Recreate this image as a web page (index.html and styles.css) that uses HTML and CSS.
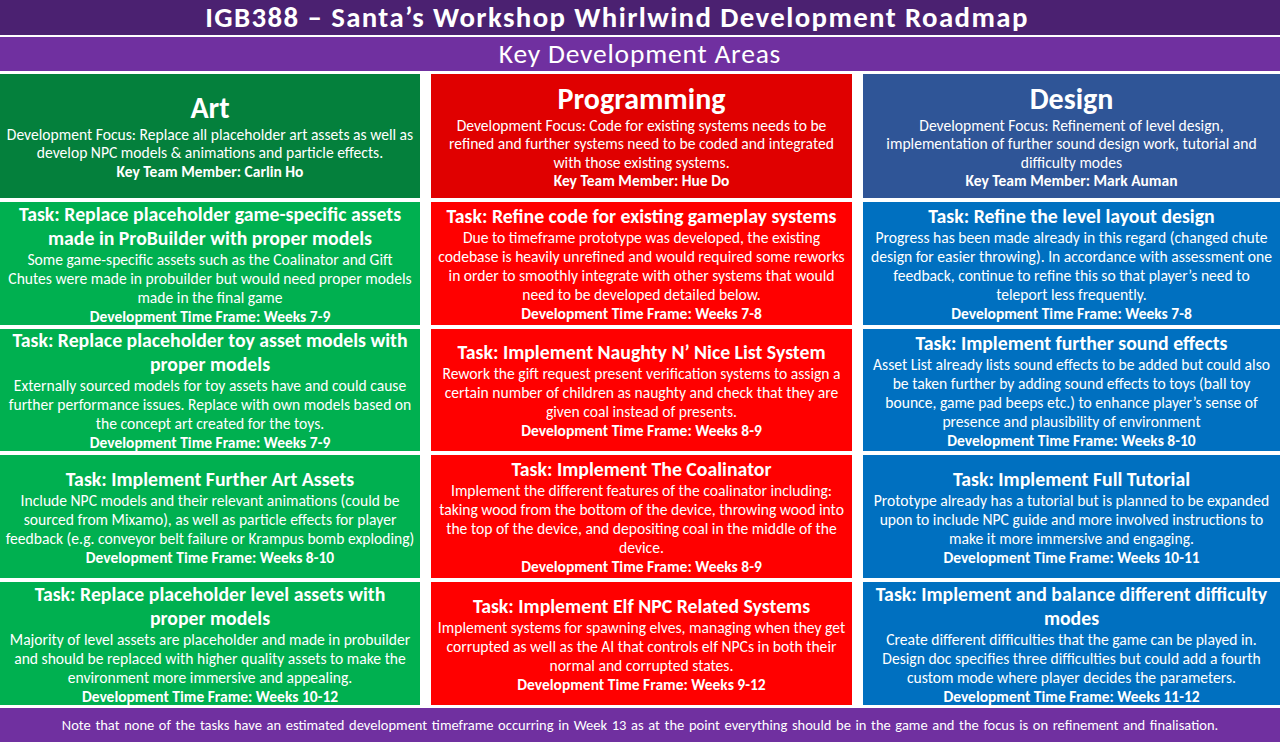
FILE: index.html
```html
<!DOCTYPE html>
<html lang="en">
<head>
<meta charset="utf-8">
<title>IGB388 Roadmap</title>
<link rel="stylesheet" href="styles.css">
</head>
<body>
<div class="page">
  <header class="title">IGB388 – Santa’s Workshop Whirlwind Development Roadmap</header>
  <div class="subtitle">Key Development Areas</div>
  <main class="grid">
    <section class="cell head art-head">
      <h2>Art</h2>
      <p>Development Focus: Replace all placeholder art assets as well as<br>develop NPC models &amp; animations and particle effects.</p>
      <p class="b">Key Team Member: Carlin Ho</p>
    </section>
    <section class="cell head prog-head">
      <h2>Programming</h2>
      <p>Development Focus: Code for existing systems needs to be<br>refined and further systems need to be coded and integrated<br>with those existing systems.</p>
      <p class="b">Key Team Member: Hue Do</p>
    </section>
    <section class="cell head design-head">
      <h2>Design</h2>
      <p>Development Focus: Refinement of level design,<br>implementation of further sound design work, tutorial and<br>difficulty modes</p>
      <p class="b">Key Team Member: Mark Auman</p>
    </section>

    <section class="cell art">
      <h3>Task: Replace placeholder game-specific assets<br>made in ProBuilder with proper models</h3>
      <p>Some game-specific assets such as the Coalinator and Gift<br>Chutes were made in probuilder but would need proper models<br>made in the final game</p>
      <p class="b">Development Time Frame: Weeks 7-9</p>
    </section>
    <section class="cell prog">
      <h3>Task: Refine code for existing gameplay systems</h3>
      <p>Due to timeframe prototype was developed, the existing<br>codebase is heavily unrefined and would required some reworks<br>in order to smoothly integrate with other systems that would<br>need to be developed detailed below.</p>
      <p class="b">Development Time Frame: Weeks 7-8</p>
    </section>
    <section class="cell design">
      <h3>Task: Refine the level layout design</h3>
      <p>Progress has been made already in this regard (changed chute<br>design for easier throwing). In accordance with assessment one<br>feedback, continue to refine this so that player’s need to<br>teleport less frequently.</p>
      <p class="b">Development Time Frame: Weeks 7-8</p>
    </section>

    <section class="cell art">
      <h3>Task: Replace placeholder toy asset models with<br>proper models</h3>
      <p>Externally sourced models for toy assets have and could cause<br>further performance issues. Replace with own models based on<br>the concept art created for the toys.</p>
      <p class="b">Development Time Frame: Weeks 7-9</p>
    </section>
    <section class="cell prog">
      <h3>Task: Implement Naughty N’ Nice List System</h3>
      <p>Rework the gift request present verification systems to assign a<br>certain number of children as naughty and check that they are<br>given coal instead of presents.</p>
      <p class="b">Development Time Frame: Weeks 8-9</p>
    </section>
    <section class="cell design">
      <h3>Task: Implement further sound effects</h3>
      <p>Asset List already lists sound effects to be added but could also<br>be taken further by adding sound effects to toys (ball toy<br>bounce, game pad beeps etc.) to enhance player’s sense of<br>presence and plausibility of environment</p>
      <p class="b">Development Time Frame: Weeks 8-10</p>
    </section>

    <section class="cell art">
      <h3>Task: Implement Further Art Assets</h3>
      <p>Include NPC models and their relevant animations (could be<br>sourced from Mixamo), as well as particle effects for player<br>feedback (e.g. conveyor belt failure or Krampus bomb exploding)</p>
      <p class="b">Development Time Frame: Weeks 8-10</p>
    </section>
    <section class="cell prog">
      <h3>Task: Implement The Coalinator</h3>
      <p>Implement the different features of the coalinator including:<br>taking wood from the bottom of the device, throwing wood into<br>the top of the device, and depositing coal in the middle of the<br>device.</p>
      <p class="b">Development Time Frame: Weeks 8-9</p>
    </section>
    <section class="cell design">
      <h3>Task: Implement Full Tutorial</h3>
      <p>Prototype already has a tutorial but is planned to be expanded<br>upon to include NPC guide and more involved instructions to<br>make it more immersive and engaging.</p>
      <p class="b">Development Time Frame: Weeks 10-11</p>
    </section>

    <section class="cell art">
      <h3>Task: Replace placeholder level assets with<br>proper models</h3>
      <p>Majority of level assets are placeholder and made in probuilder<br>and should be replaced with higher quality assets to make the<br>environment more immersive and appealing.</p>
      <p class="b">Development Time Frame: Weeks 10-12</p>
    </section>
    <section class="cell prog">
      <h3>Task: Implement Elf NPC Related Systems</h3>
      <p>Implement systems for spawning elves, managing when they get<br>corrupted as well as the AI that controls elf NPCs in both their<br>normal and corrupted states.</p>
      <p class="b">Development Time Frame: Weeks 9-12</p>
    </section>
    <section class="cell design">
      <h3>Task: Implement and balance different difficulty<br>modes</h3>
      <p>Create different difficulties that the game can be played in.<br>Design doc specifies three difficulties but could add a fourth<br>custom mode where player decides the parameters.</p>
      <p class="b">Development Time Frame: Weeks 11-12</p>
    </section>
  </main>
  <footer class="note">Note that none of the tasks have an estimated development timeframe occurring in Week 13 as at the point everything should be in the game and the focus is on refinement and finalisation.</footer>
</div>
</body>
</html>
```

FILE: styles.css
```css
* { box-sizing: border-box; }
html, body { margin: 0; padding: 0; background: #ffffff; }
body {
  font-family: "Carlito", "Liberation Sans Narrow", "DejaVu Sans Condensed", "Open Sans", sans-serif;
  color: #ffffff;
}
.page {
  width: 1280px;
  height: 742px;
  display: flex;
  flex-direction: column;
  overflow: hidden;
}
.title {
  height: 35px;
  background: #4b2171;
  font-weight: bold;
  font-size: 28.8px;
  line-height: 35px;
  letter-spacing: 1.4px;
  text-align: center;
  padding-right: 46px;
  white-space: nowrap;
}
.subtitle {
  height: 34px;
  margin-top: 2px;
  background: #7030a0;
  font-size: 27.5px;
  line-height: 34px;
  letter-spacing: 0.8px;
  text-align: center;
}
.grid {
  margin-top: 3px;
  display: grid;
  grid-template-columns: 420px 421px 417px;
  grid-template-rows: 124px 123px 122px 123px 123px;
  column-gap: 11px;
  row-gap: 4px;
}
.cell {
  display: flex;
  flex-direction: column;
  justify-content: center;
  align-items: center;
  text-align: center;
  padding: 2px 2px;
}
.cell h2 {
  margin: 0 0 1px;
  font-size: 30px;
  line-height: 34px;
  font-weight: bold;
}
.cell h3 {
  margin: 0;
  font-size: 19.8px;
  line-height: 24px;
  font-weight: bold;
  white-space: nowrap;
}
.cell p {
  margin: 0;
  font-size: 15.6px;
  line-height: 19px;
  white-space: nowrap;
}
.cell.head p { line-height: 18.5px; }
.cell p.b { font-weight: bold; font-size: 15.5px; }
.art-head { background: #04803c; }
.prog-head { background: #e00000; }
.design-head { background: #2f5597; }
.art { background: #00b050; }
.prog { background: #ff0000; }
.design { background: #0070c0; }
.note {
  margin-top: 3px;
  height: 34px;
  background: #7030a0;
  font-size: 14.5px;
  line-height: 34px;
  text-align: center;
  word-spacing: 1.35px;
  white-space: nowrap;
}
```
